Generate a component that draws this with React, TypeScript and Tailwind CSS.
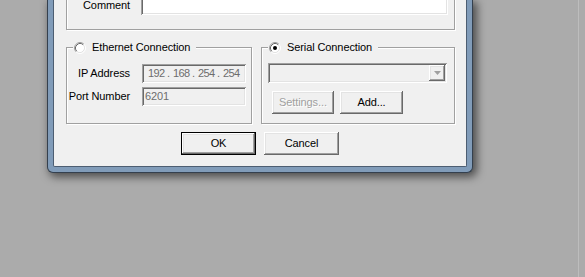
const FONT = "font-['Liberation_Sans',Arial,sans-serif]";

const SUNKEN =
  "shadow-[inset_1px_1px_0_#a0a0a0,inset_-1px_-1px_0_#ffffff,inset_2px_2px_0_#696969,inset_-2px_-2px_0_#e3e3e3]";
const RAISED =
  "shadow-[inset_-1px_-1px_0_#696969,inset_1px_1px_0_#ffffff,inset_-2px_-2px_0_#a0a0a0,inset_2px_2px_0_#e3e3e3]";
const ETCHED = "border border-[#a0a0a0] shadow-[inset_1px_1px_0_#ffffff,1px_1px_0_#ffffff]";

function Radio({ checked }: { checked?: boolean }) {
  return (
    <svg width="12" height="12" viewBox="0 0 12 12" className="shrink-0">
      <circle cx="6" cy="6" r="4.2" fill="#ffffff" />
      <path d="M2.11 9.89 A5.5 5.5 0 0 1 9.89 2.11" fill="none" stroke="#a0a0a0" strokeWidth="1" />
      <path d="M9.89 2.11 A5.5 5.5 0 0 1 2.11 9.89" fill="none" stroke="#ffffff" strokeWidth="1" />
      <path d="M2.82 9.18 A4.5 4.5 0 0 1 9.18 2.82" fill="none" stroke="#696969" strokeWidth="1" />
      <path d="M9.18 2.82 A4.5 4.5 0 0 1 2.82 9.18" fill="none" stroke="#e3e3e3" strokeWidth="1" />
      {checked && <circle cx="6" cy="6" r="2" fill="#000000" />}
    </svg>
  );
}

function Legend({ label, checked }: { label: string; checked?: boolean }) {
  return (
    <div className="absolute left-[6px] top-[-7px] flex h-[13px] items-center gap-[6px] bg-[#f0f0f0] pl-px pr-[6px]">
      <Radio checked={checked} />
      <span className="leading-[13px] text-black">{label}</span>
    </div>
  );
}

function Button({ label, disabled, isDefault }: { label: string; disabled?: boolean; isDefault?: boolean }) {
  return (
    <div
      className={`flex h-[23px] items-center justify-center bg-[#f0f0f0] ${RAISED} ${
        isDefault ? "border border-black" : ""
      }`}
    >
      <span
        className={
          disabled ? "text-[#a0a0a0] [text-shadow:1px_1px_0_#ffffff]" : "text-black"
        }
      >
        {label}
      </span>
    </div>
  );
}

export default function App() {
  return (
    <div className={`flex h-[277px] w-[585px] overflow-hidden bg-[#ababab] text-[11px] tracking-[-0.1px] ${FONT}`}>
      {/* Dialog window, top part off screen */}
      <div className="ml-[47px] flex h-[173px] w-[426px] shrink-0 rounded-b-[6px] border-x border-b border-[#34404e] bg-[#819cb9] px-[5px] pb-[5px] shadow-[3px_3px_9px_1px_rgba(0,0,0,0.55)]">
        <div className="flex flex-1 flex-col overflow-hidden rounded-b-[2px] border-x border-b border-[#4d5e72] bg-[#f0f0f0]">
          {/* Comment group */}
          <div className={`ml-[12px] mt-[-20px] h-[50px] w-[389px] ${ETCHED}`}>
            <div className="flex items-center pt-[14px]">
              <span className="w-[63px] text-right text-black">Comment</span>
              <div className={`ml-[11px] h-[20px] w-[307px] bg-white ${SUNKEN}`} />
            </div>
          </div>

          {/* Connection groups */}
          <div className="ml-[12px] mt-[17px] flex h-[77px] gap-[9px]">
            <div className={`relative w-[186px] ${ETCHED}`}>
              <Legend label="Ethernet Connection" />
              <div className="flex flex-col gap-[4px] pt-[16px]">
                <div className="flex items-center">
                  <span className="w-[63px] text-right text-black">IP Address</span>
                  <div className={`ml-[12px] flex h-[19px] w-[104px] items-center pl-[6px] text-[#6d6d6d] ${SUNKEN}`}>
                    <span className="w-[16px] tracking-[-0.6px]">192</span>
                    <span className="w-[9px] text-center">.</span>
                    <span className="w-[16px] tracking-[-0.6px]">168</span>
                    <span className="w-[9px] text-center">.</span>
                    <span className="w-[16px] tracking-[-0.6px]">254</span>
                    <span className="w-[9px] text-center">.</span>
                    <span className="w-[16px] tracking-[-0.6px]">254</span>
                  </div>
                </div>
                <div className="flex items-center">
                  <span className="w-[63px] text-right text-black">Port Number</span>
                  <div className={`ml-[12px] flex h-[19px] w-[104px] items-center pl-[3px] text-[#6d6d6d] ${SUNKEN}`}>
                    6201
                  </div>
                </div>
              </div>
            </div>

            <div className={`relative w-[194px] ${ETCHED}`}>
              <Legend label="Serial Connection" checked />
              <div className="flex flex-col pt-[15px]">
                <div className={`ml-[6px] flex h-[20px] w-[179px] justify-end p-[2px] ${SUNKEN}`}>
                  <div className={`flex w-[16px] items-center justify-center bg-[#f0f0f0] ${RAISED}`}>
                    <svg width="7" height="4" viewBox="0 0 7 4">
                      <path d="M0 0H7L3.5 4Z" fill="#a0a0a0" />
                    </svg>
                  </div>
                </div>
                <div className="ml-[10px] mt-[8px] flex gap-[6px]">
                  <div className="w-[62px]">
                    <Button label="Settings..." disabled />
                  </div>
                  <div className="w-[63px]">
                    <Button label="Add..." />
                  </div>
                </div>
              </div>
            </div>
          </div>

          {/* Dialog buttons */}
          <div className="mt-[8px] flex justify-center gap-[8px]">
            <div className="w-[75px]">
              <Button label="OK" isDefault />
            </div>
            <div className="w-[75px]">
              <Button label="Cancel" />
            </div>
          </div>
        </div>
      </div>

      <div className="flex-1" />
      <div className="w-px bg-[#bdbdbd]" />
      <div className="w-[6px]" />
    </div>
  );
}
